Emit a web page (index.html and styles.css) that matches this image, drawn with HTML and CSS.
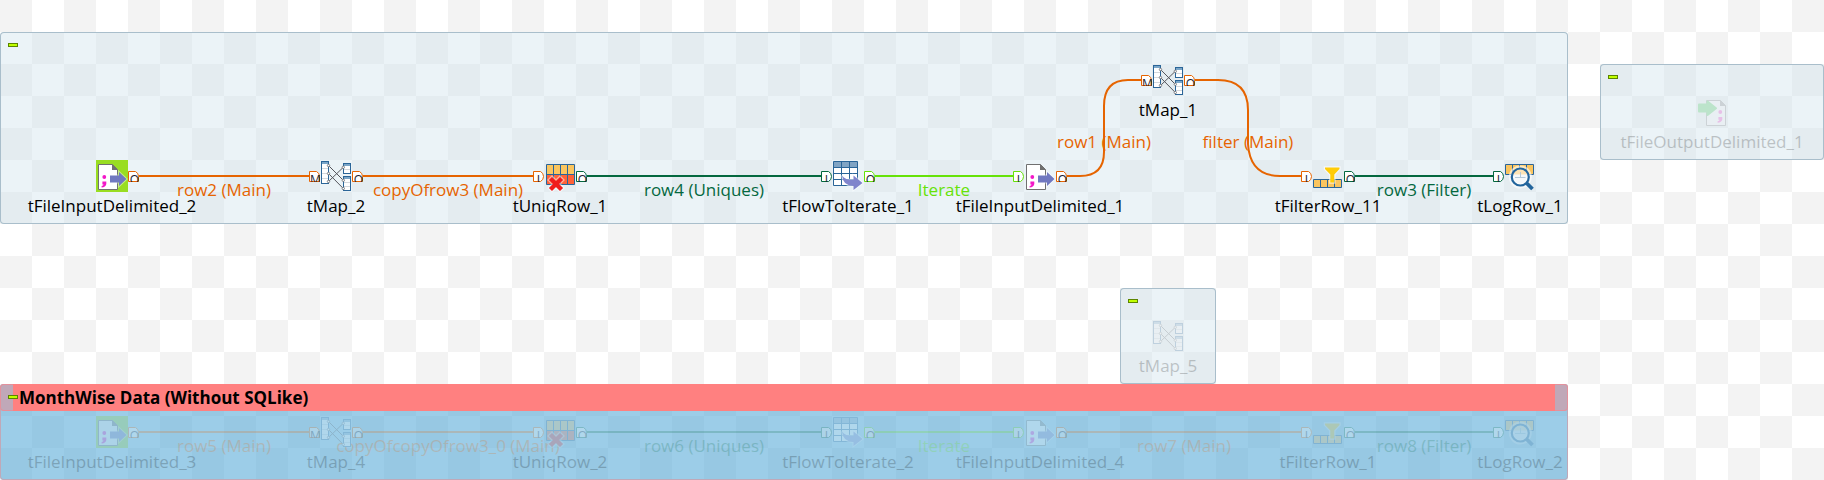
FILE: index.html
```html
<!DOCTYPE html>
<html lang="en">
<head>
<meta charset="utf-8">
<title>Job designer</title>
<link rel="stylesheet" href="styles.css">
</head>
<body>
<svg class="defs" aria-hidden="true">
  <symbol id="file-input" viewBox="0 0 32 32">
    <path d="M2.5 4.5H16.5L21.5 9.5V29.5H2.5Z" fill="#fff" stroke="#707070"/>
    <path d="M16 4L22 10H16Z" fill="#707070"/>
    <circle cx="8.3" cy="17" r="1.9" fill="#f318c8"/>
    <path d="M6.4 21.5H10.3V24Q9.6 27.3 5.6 27.6V26Q7.4 25.600 7.600 24.500H6.400Z" fill="#f318c8"/>
    <path d="M14 15.500H23V12L30.500 19L23 26V22.500H14Z" fill="#7078c0" stroke="#fff" stroke-opacity=".45" stroke-width="2" paint-order="stroke"/>
  </symbol>
  <symbol id="file-output" viewBox="0 0 32 32">
    <path d="M10.500 4.500H24.500L29.500 9.500V29.500H10.500Z" fill="#fff" stroke="#707070"/>
    <path d="M24 4L30 10H24Z" fill="#707070"/>
    <circle cx="24.300" cy="16" r="1.900" fill="#f318c8"/>
    <path d="M22.400 21H26.300V23.500Q25.600 26.500 21.600 26.800V25.200Q23.400 24.800 23.600 23.700H22.400Z" fill="#f318c8"/>
    <path d="M3 8.500H11.500V5.500L20 12.300L11.500 19V15.500H3Z" fill="#22c83c" stroke="#22c83c" stroke-width="2" stroke-linejoin="round"/>
  </symbol>
  <symbol id="map" viewBox="0 0 32 32">
    <g fill="#fff" stroke="#2a6598">
      <rect x="1.500" y="1.500" width="7" height="22"/>
      <rect x="23.500" y="3.500" width="7" height="10"/>
      <rect x="23.500" y="16.500" width="7" height="14"/>
    </g>
    <path d="M2 3H8M24 5H30M24 18H30" stroke="#7ba6c8" stroke-width="2"/>
    <path d="M2 8.500H8M2 13.500H8M2 18.500H8M24 9.500H30M24 22.500H30M24 26.500H30" stroke="#d4d8dc"/>
    <path d="M8.500 5.500L23.300 20.300M8.500 13.500L23.300 28.500M8.500 21.500L23.300 7.300" stroke="#55565c" fill="none"/>
    <g fill="#fff" stroke="#66676c" stroke-width=".8">
      <circle cx="8.500" cy="5.500" r="1.200"/><circle cx="8.500" cy="13.500" r="1.200"/><circle cx="8.500" cy="21.500" r="1.200"/>
      <circle cx="23.300" cy="7.300" r="1.200"/><circle cx="23.300" cy="20.300" r="1.200"/><circle cx="23.300" cy="28.500" r="1.200"/>
    </g>
  </symbol>
  <symbol id="uniq" viewBox="0 0 32 32">
    <path d="M2.500 4.500H30.500V14.500H2.500Z" fill="#fac55f"/>
    <path d="M2.500 14.500H30.500V24.500H2.500Z" fill="#ff6238"/>
    <path d="M2.500 4.500H30.500V24.500H2.500ZM2.500 14.500H30.500M9.500 4.500V24.500M16.500 4.500V24.500M23.500 4.500V24.500" fill="none" stroke="#2a6598"/>
    <path d="M8 20L16 28M16 20L8 28" stroke="#fff" stroke-opacity=".5" stroke-width="7" stroke-linecap="square"/>
    <path d="M8 20L16 28M16 20L8 28" stroke="#f01c1c" stroke-width="4.400" stroke-linecap="square"/>
  </symbol>
  <symbol id="iterate" viewBox="0 0 32 32">
    <path d="M1.500 1.500H25.500V25.500H1.500Z" fill="#fff"/>
    <path d="M1.500 1.500H25.500V7.500H1.500Z" fill="#80a4c4"/>
    <path d="M1.500 1.500H25.500V25.500H1.500ZM1.500 7.500H25.500M1.500 13.500H25.500M1.500 19.500H25.500M9.500 1.500V25.500M17.500 1.500V25.500" fill="none" stroke="#2a6598"/>
    <path d="M10 15.500Q13 20 21.500 20V15.500L30.500 23L21.500 30V26Q11 26 10 15.500Z" fill="#8084cc" stroke="#fff" stroke-opacity=".55" stroke-width="2" paint-order="stroke"/>
  </symbol>
  <symbol id="filter" viewBox="0 0 32 32">
    <path d="M1.500 19.500H29.500V27.500H1.500ZM8.500 19.500V27.500M15.500 19.500V27.500M22.500 19.500V27.500" fill="#fac55f" stroke="#2a6598"/>
    <path d="M13 7.500H27.500V9L22.300 14.500V22.500H18.300V14.500L13 9Z" fill="#ffcc08" stroke="#fff" stroke-opacity=".6" stroke-width="2.500" paint-order="stroke"/>
  </symbol>
  <symbol id="log" viewBox="0 0 32 32">
    <path d="M1.500 4.500H29.500V14.500H1.500ZM8.500 4.500V14.500M15.500 4.500V14.500M22.500 4.500V14.500" fill="#fac55f" stroke="#2a6598"/>
    <circle cx="16.300" cy="17" r="9" fill="#f5f8fa" stroke="#fff" stroke-opacity=".6" stroke-width="5"/>
    <path d="M9 14.500Q10 9.500 16.300 9Q22.500 9.500 23.600 14.500Z" fill="#fde3b4"/>
    <path d="M11 17.500H21.500M16.500 12V17.500" stroke="#b4c9d8"/>
    <circle cx="16.300" cy="17" r="8.500" fill="none" stroke="#22659c" stroke-width="2.200"/>
    <path d="M22.500 23L28.500 29" stroke="#22659c" stroke-width="3.800"/>
  </symbol>
  <symbol id="port-o" viewBox="0 0 11 11">
    <path d="M.5 .5H7.500Q10.500 2 10.500 5.500V10.500H.5Z" fill="#fff" stroke="currentColor"/>
    <text x="6.500" y="13" class="port-letter">O</text>
  </symbol>
  <symbol id="port-m" viewBox="0 0 11 11">
    <path d="M.5 .5H7.500Q10.500 2 10.500 5.500V10.500H.5Z" fill="#fff" stroke="currentColor"/>
    <text x="6.500" y="13" class="port-letter">M</text>
  </symbol>
  <symbol id="port-i" viewBox="0 0 11 11">
    <path d="M.5 .5H7.500Q10.500 2 10.500 5.500Q10.500 9 7.500 10.500H.5Z" fill="#fff" stroke="currentColor"/>
    <text x="5.500" y="13" class="port-letter">I</text>
  </symbol>
</svg>

<main class="canvas">
  <section class="subjob subjob-main">
    <button class="collapse" type="button" aria-label="Collapse subjob"></button>
    <svg class="links" aria-hidden="true">
      <g class="main">
        <path d="M139 144H309M363 144H533"/>
        <path d="M1067 144H1080Q1104 144 1104 120V74Q1104 48 1128 48H1141"/>
        <path d="M1195 48H1218Q1248 48 1248 78V112Q1250 144 1280 144H1301"/>
        <use href="#port-o" x="128" y="139" width="11" height="11"/>
        <use href="#port-m" x="309" y="139" width="11" height="11"/>
        <use href="#port-o" x="352" y="139" width="11" height="11"/>
        <use href="#port-i" x="533" y="139" width="11" height="11"/>
        <use href="#port-o" x="1056" y="139" width="11" height="11"/>
        <use href="#port-m" x="1141" y="43" width="11" height="11"/>
        <use href="#port-o" x="1184" y="43" width="11" height="11"/>
        <use href="#port-i" x="1301" y="139" width="11" height="11"/>
      </g>
      <g class="flow">
        <path d="M587 144H821M1355 144H1493"/>
        <use href="#port-o" x="576" y="139" width="11" height="11"/>
        <use href="#port-i" x="821" y="139" width="11" height="11"/>
        <use href="#port-o" x="1344" y="139" width="11" height="11"/>
        <use href="#port-i" x="1493" y="139" width="11" height="11"/>
      </g>
      <g class="iterate">
        <path d="M875 144H1013"/>
        <use href="#port-o" x="864" y="139" width="11" height="11"/>
        <use href="#port-i" x="1013" y="139" width="11" height="11"/>
      </g>
    </svg>
    <span class="link-label main on-1">row2 (Main)</span>
    <span class="link-label main on-2">copyOfrow3 (Main)</span>
    <span class="link-label flow on-3">row4 (Uniques)</span>
    <span class="link-label iterate on-4">Iterate</span>
    <span class="link-label main on-5">row1 (Main)</span>
    <span class="link-label main on-6">filter (Main)</span>
    <span class="link-label flow on-7">row3 (Filter)</span>
    <div class="node col-1"><svg class="icon start"><use href="#file-input"/></svg><span>tFileInputDelimited_2</span></div>
    <div class="node col-2"><svg class="icon"><use href="#map"/></svg><span>tMap_2</span></div>
    <div class="node col-3"><svg class="icon"><use href="#uniq"/></svg><span>tUniqRow_1</span></div>
    <div class="node col-4"><svg class="icon"><use href="#iterate"/></svg><span>tFlowToIterate_1</span></div>
    <div class="node col-5"><svg class="icon"><use href="#file-input"/></svg><span>tFileInputDelimited_1</span></div>
    <div class="node col-6"><svg class="icon"><use href="#map"/></svg><span>tMap_1</span></div>
    <div class="node col-7"><svg class="icon"><use href="#filter"/></svg><span>tFilterRow_11</span></div>
    <div class="node col-8"><svg class="icon"><use href="#log"/></svg><span>tLogRow_1</span></div>
  </section>

  <section class="subjob subjob-output">
    <button class="collapse" type="button" aria-label="Collapse subjob"></button>
    <div class="node disabled"><svg class="icon"><use href="#file-output"/></svg><span>tFileOutputDelimited_1</span></div>
  </section>

  <section class="subjob subjob-map">
    <button class="collapse" type="button" aria-label="Collapse subjob"></button>
    <div class="node disabled"><svg class="icon"><use href="#map"/></svg><span>tMap_5</span></div>
  </section>

  <section class="subjob subjob-month">
    <header class="title-bar"><h2>MonthWise Data (Without SQLike)</h2></header>
    <button class="collapse" type="button" aria-label="Collapse MonthWise Data"></button>
    <div class="disabled">
      <svg class="links" aria-hidden="true">
        <g class="main">
          <path d="M139 48H309M363 48H533M1067 48H1301"/>
          <use href="#port-o" x="128" y="43" width="11" height="11"/>
          <use href="#port-m" x="309" y="43" width="11" height="11"/>
          <use href="#port-o" x="352" y="43" width="11" height="11"/>
          <use href="#port-i" x="533" y="43" width="11" height="11"/>
          <use href="#port-o" x="1056" y="43" width="11" height="11"/>
          <use href="#port-i" x="1301" y="43" width="11" height="11"/>
        </g>
        <g class="flow">
          <path d="M587 48H821M1355 48H1493"/>
          <use href="#port-o" x="576" y="43" width="11" height="11"/>
          <use href="#port-i" x="821" y="43" width="11" height="11"/>
          <use href="#port-o" x="1344" y="43" width="11" height="11"/>
          <use href="#port-i" x="1493" y="43" width="11" height="11"/>
        </g>
        <g class="iterate">
          <path d="M875 48H1013"/>
          <use href="#port-o" x="864" y="43" width="11" height="11"/>
          <use href="#port-i" x="1013" y="43" width="11" height="11"/>
        </g>
      </svg>
      <span class="link-label main on-1">row5 (Main)</span>
      <span class="link-label main on-2">copyOfcopyOfrow3_0 (Main)</span>
      <span class="link-label flow on-3">row6 (Uniques)</span>
      <span class="link-label iterate on-4">Iterate</span>
      <span class="link-label main on-8">row7 (Main)</span>
      <span class="link-label flow on-7">row8 (Filter)</span>
      <div class="node col-1"><svg class="icon start"><use href="#file-input"/></svg><span>tFileInputDelimited_3</span></div>
      <div class="node col-2"><svg class="icon"><use href="#map"/></svg><span>tMap_4</span></div>
      <div class="node col-3"><svg class="icon"><use href="#uniq"/></svg><span>tUniqRow_2</span></div>
      <div class="node col-4"><svg class="icon"><use href="#iterate"/></svg><span>tFlowToIterate_2</span></div>
      <div class="node col-5"><svg class="icon"><use href="#file-input"/></svg><span>tFileInputDelimited_4</span></div>
      <div class="node col-7"><svg class="icon"><use href="#filter"/></svg><span>tFilterRow_1</span></div>
      <div class="node col-8"><svg class="icon"><use href="#log"/></svg><span>tLogRow_2</span></div>
    </div>
  </section>
</main>
</body>
</html>
```

FILE: styles.css
```css
* {
  box-sizing: border-box;
}

body {
  margin: 0;
  font-family: "Open Sans", "Noto Sans", sans-serif;
  font-size: 17px;
  line-height: 24px;
  color: #000;
}

.defs {
  position: absolute;
  width: 0;
  height: 0;
}

.canvas {
  position: relative;
  min-height: 100vh;
  background: repeating-conic-gradient(#fff 0 25%, #f3f3f3 0 50%) 0 0 / 64px 64px;
}

/* Subjob frames on the design canvas */
.subjob {
  position: absolute;
  border-radius: 4px;
  background: rgba(205, 225, 235, 0.4);
  box-shadow: inset 0 0 0 1px #a9becb;
}

.subjob-main {
  left: 0;
  top: 32px;
  width: 1568px;
  height: 192px;
  --row: 128px;
}

.subjob-output {
  left: 1600px;
  top: 64px;
  width: 224px;
  height: 96px;
}

.subjob-map {
  left: 1120px;
  top: 288px;
  width: 96px;
  height: 96px;
}

.subjob-month {
  left: 0;
  top: 384px;
  width: 1568px;
  height: 96px;
  --row: 32px;
  background: rgba(90, 172, 216, 0.6);
  box-shadow: inset 0 0 0 1px #c0a8b8;
}

.title-bar {
  padding: 0 13px;
  border-radius: 4px;
  background: #c0a8b8;
  box-shadow: inset 0 0 0 1px #e4919c;
}

.title-bar h2 {
  margin: 0;
  padding-left: 6px;
  background: #ff8080;
  font-size: 17px;
  line-height: 27px;
  font-weight: 700;
}

.collapse {
  position: absolute;
  left: 8px;
  top: 11px;
  width: 10px;
  height: 4px;
  padding: 0;
  border: 1px solid #5c8500;
  background: #c0ff00;
}

/* Components */
.node {
  position: absolute;
  top: var(--row);
  width: 200px;
  margin-left: -100px;
  display: flex;
  flex-direction: column;
  align-items: center;
  gap: 2px;
  white-space: nowrap;
}

.subjob-output .node,
.subjob-map .node {
  left: 50%;
  top: 32px;
}

.icon {
  width: 32px;
  height: 32px;
}

.start {
  background: #99dd22;
}

.col-1 { left: 112px; }
.col-2 { left: 336px; }
.col-3 { left: 560px; }
.col-4 { left: 848px; }
.col-5 { left: 1040px; }
.col-6 { left: 1168px; top: 32px; }
.col-7 { left: 1328px; }
.col-8 { left: 1520px; }

/* Connections */
.links {
  position: absolute;
  inset: 0;
  width: 100%;
  height: 100%;
}

.links path {
  fill: none;
  stroke: currentColor;
  stroke-width: 2;
}

.port-letter {
  font: 12px "Open Sans", sans-serif;
  fill: #1c1c30;
  text-anchor: middle;
}

.main { color: #e66400; }
.flow { color: #04683f; }
.iterate { color: #66e208; }

.link-label {
  position: absolute;
  top: calc(var(--row) + 18px);
  width: 240px;
  margin-left: -120px;
  text-align: center;
  white-space: nowrap;
}

.on-1 { left: 224px; }
.on-2 { left: 448px; }
.on-3 { left: 704px; }
.on-4 { left: 944px; }
.on-5 { left: 1104px; top: 98px; }
.on-6 { left: 1248px; top: 98px; }
.on-7 { left: 1424px; }
.on-8 { left: 1184px; }

.disabled {
  opacity: 0.2;
}

.subjob-month .disabled {
  position: absolute;
  inset: 0;
}
```
